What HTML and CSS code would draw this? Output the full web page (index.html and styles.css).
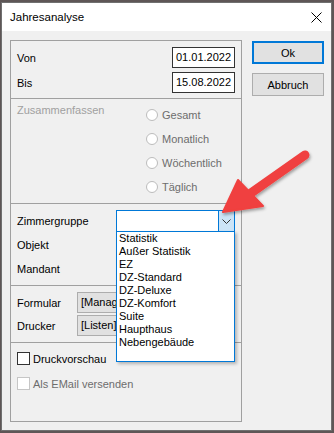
FILE: index.html
```html
<!DOCTYPE html>
<html lang="de">

<head>
    <meta charset="UTF-8">
    <meta name="viewport" content="width=device-width, initial-scale=1.0">
    <title>Jahresanalyse</title>
    <link rel="stylesheet" href="styles.css">
</head>

<body>
    <div class="window">
        <!-- title -->
        <div class="titlebar">
            <span class="title">Jahresanalyse</span>
            <svg class="close" width="11" height="11" viewBox="0 0 11 11">
                <path d="M0.5 0.5 L10.5 10.5 M10.5 0.5 L0.5 10.5" stroke="#000" stroke-width="1" fill="none" />
            </svg>
        </div>

        <div class="content">
            <div class="panel">
                <!-- zeitraum -->
                <div class="section dates">
                    <div class="row">
                        <span>Von</span>
                        <div class="date">01.01.2022</div>
                    </div>
                    <div class="row">
                        <span>Bis</span>
                        <div class="date">15.08.2022</div>
                    </div>
                </div>

                <!-- zusammenfassen -->
                <div class="section summary">
                    <span class="summary_label">Zusammenfassen</span>
                    <div class="radios">
                        <div class="radio"><span class="circle"></span>Gesamt</div>
                        <div class="radio"><span class="circle"></span>Monatlich</div>
                        <div class="radio"><span class="circle"></span>Wöchentlich</div>
                        <div class="radio"><span class="circle"></span>Täglich</div>
                    </div>
                </div>

                <!-- filter -->
                <div class="section filter">
                    <div class="row">
                        <span class="filter_label">Zimmergruppe</span>
                        <div class="combo">
                            <div class="combo_btn">
                                <svg width="9" height="5" viewBox="0 0 9 5">
                                    <path d="M0.5 0.5 L4.5 4.5 L8.5 0.5" stroke="#333" stroke-width="1" fill="none" />
                                </svg>
                            </div>
                            <ul class="dropdown">
                                <li>Statistik</li>
                                <li>Außer Statistik</li>
                                <li>EZ</li>
                                <li>DZ-Standard</li>
                                <li>DZ-Deluxe</li>
                                <li>DZ-Komfort</li>
                                <li>Suite</li>
                                <li>Haupthaus</li>
                                <li>Nebengebäude</li>
                            </ul>
                        </div>
                    </div>
                    <div class="row"><span class="filter_label">Objekt</span></div>
                    <div class="row"><span class="filter_label">Mandant</span></div>
                </div>

                <!-- druck -->
                <div class="section print">
                    <div class="row">
                        <span class="print_label">Formular</span>
                        <div class="select"><span class="select_text">[Manag</span></div>
                    </div>
                    <div class="row">
                        <span class="print_label">Drucker</span>
                        <div class="select"><span class="select_text">[Listen]</span></div>
                    </div>
                </div>

                <!-- optionen -->
                <div class="section options">
                    <div class="check"><span class="box"></span>Druckvorschau</div>
                    <div class="check disabled"><span class="box"></span>Als EMail versenden</div>
                </div>
            </div>

            <div class="buttons">
                <button class="btn default">Ok</button>
                <button class="btn">Abbruch</button>
            </div>
        </div>
    </div>

    <!-- roter pfeil -->
    <svg class="arrow" width="334" height="433" viewBox="0 0 334 433">
        <defs>
            <filter id="shadow" x="-20%" y="-20%" width="140%" height="140%">
                <feDropShadow dx="1" dy="2" stdDeviation="1.5" flood-color="#000" flood-opacity="0.35" />
            </filter>
        </defs>
        <g filter="url(#shadow)" fill="#f0403f" stroke="#f0403f">
            <line x1="305" y1="155" x2="251" y2="193" stroke-width="9" stroke-linecap="round" />
            <polygon points="223,212 238,180 263,206" stroke-width="2" stroke-linejoin="round" />
        </g>
    </svg>
</body>

</html>
```

FILE: styles.css
```css
* {
    box-sizing: border-box;
}

body {
    margin: 0;
    width: 334px;
    height: 433px;
    overflow: hidden;
    background: #5e5656;
    font-family: "Liberation Sans", Arial, sans-serif;
    font-size: 11px;
    color: #000;
}

.window {
    margin: 2px 0 0 1px;
    width: 331px;
    height: 429px;
    border: 1px solid #707070;
    background: #f0f0f0;
}

.titlebar {
    height: 28px;
    background: #fff;
    display: flex;
    align-items: center;
    justify-content: space-between;
    padding: 0 9px 0 8px;
}

.title {
    font-size: 11.5px;
}

.content {
    display: flex;
    align-items: flex-start;
    padding: 9px 0 0 8px;
}

.panel {
    width: 232px;
    height: 382px;
    border: 1px solid #a0a0a0;
}

.section {
    border-top: 1px solid #a0a0a0;
}

.section:first-child {
    border-top: none;
}

.row {
    display: flex;
    align-items: center;
}

/* zeitraum */
.dates {
    height: 57px;
    padding: 6px 6px 0 6px;
    display: flex;
    flex-direction: column;
    gap: 4px;
}

.dates .row {
    height: 21px;
    justify-content: space-between;
}

.date {
    width: 63px;
    height: 21px;
    border: 1px solid #333;
    background: #fff;
    line-height: 19px;
    padding-left: 3px;
}

/* zusammenfassen */
.summary {
    height: 105px;
    padding: 4px 0 0 6px;
    display: flex;
}

.summary_label {
    width: 129px;
    color: #a0a0a0;
    line-height: 14px;
}

.radios {
    display: flex;
    flex-direction: column;
}

.radio {
    height: 24px;
    display: flex;
    align-items: center;
    gap: 4px;
    color: #6d6d6d;
}

.circle {
    width: 12px;
    height: 12px;
    border: 1px solid #bcbcbc;
    border-radius: 50%;
    background: #fff;
}

/* filter */
.filter {
    height: 82px;
    padding: 6px 0 0 6px;
    display: flex;
    flex-direction: column;
    gap: 2px;
}

.filter .row {
    height: 22px;
}

.filter_label {
    width: 99px;
}

.combo {
    position: relative;
    width: 119px;
    height: 22px;
    border: 1px solid #0078d7;
    background: #fff;
    display: flex;
    justify-content: flex-end;
}

.combo_btn {
    width: 16px;
    height: 20px;
    border-left: 1px solid #0078d7;
    background: #cce4f7;
    display: flex;
    align-items: center;
    justify-content: center;
}

.dropdown {
    position: absolute;
    top: 20px;
    left: -1px;
    width: 119px;
    height: 131px;
    margin: 0;
    padding: 0 0 0 2px;
    list-style: none;
    border: 1px solid #0078d7;
    background: #fff;
    box-shadow: 2px 2px 3px rgba(0, 0, 0, 0.25);
}

.dropdown li {
    height: 13px;
    line-height: 13px;
    white-space: nowrap;
}

/* druck */
.print {
    height: 57px;
    padding: 6px 0 0 6px;
    display: flex;
    flex-direction: column;
    gap: 2px;
}

.print .row {
    height: 21px;
}

.print_label {
    width: 60px;
}

.select {
    width: 158px;
    height: 21px;
    border: 1px solid #adadad;
    background: #e1e1e1;
    line-height: 19px;
    padding-left: 3px;
}

.select_text {
    display: inline-block;
    max-width: 35px;
    overflow: hidden;
    white-space: nowrap;
    vertical-align: top;
}

/* optionen */
.options {
    height: 78px;
    padding: 7px 0 0 6px;
    display: flex;
    flex-direction: column;
    gap: 8px;
}

.check {
    height: 17px;
    display: flex;
    align-items: center;
    gap: 3px;
}

.box {
    width: 13px;
    height: 13px;
    border: 1px solid #333;
    background: #fff;
}

.check.disabled {
    color: #6d6d6d;
}

.check.disabled .box {
    border-color: #c6c6c6;
}

/* buttons */
.buttons {
    margin: 1px 0 0 10px;
    display: flex;
    flex-direction: column;
    gap: 9px;
}

.btn {
    width: 72px;
    height: 23px;
    border: 1px solid #adadad;
    background: #e1e1e1;
    font-family: "Liberation Sans", Arial, sans-serif;
    font-size: 11px;
    color: #000;
    padding: 0;
}

.btn.default {
    border: 2px solid #0078d7;
}

.arrow {
    position: absolute;
    left: 0;
    top: 0;
    pointer-events: none;
}
```
